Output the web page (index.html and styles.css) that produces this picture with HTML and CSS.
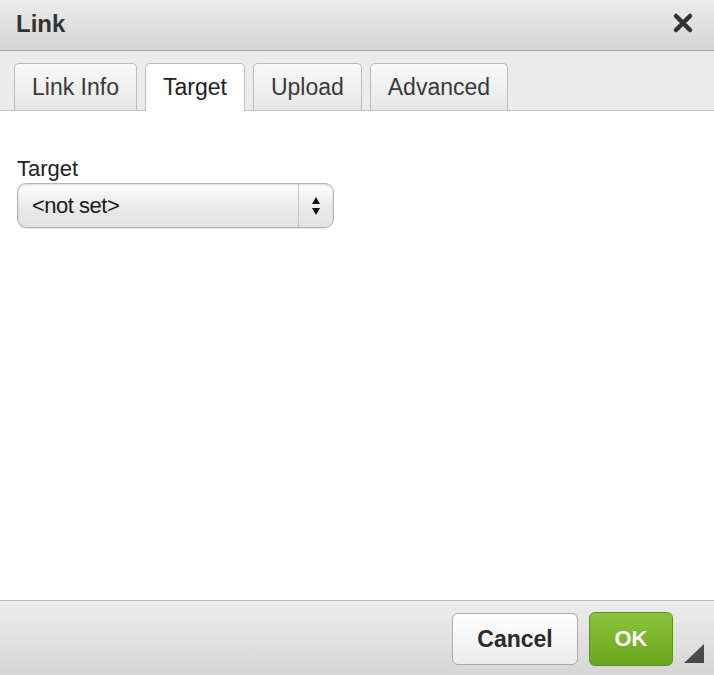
FILE: index.html
```html
<!DOCTYPE html>
<html lang="en">
<head>
  <meta charset="UTF-8">
  <title>Link</title>
  <link rel="stylesheet" href="styles.css">
</head>
<body>

  <div class="dialog">
    <div class="titlebar">
      <span class="title">Link</span>
      <svg class="close" width="22" height="22" viewBox="0 0 22 22">
        <path d="M4 4 L18 18 M18 4 L4 18" stroke="#333" stroke-width="4.5" stroke-linecap="round"/>
      </svg>
    </div>

    <div class="tabs">
      <div class="tab">Link Info</div>
      <div class="tab active">Target</div>
      <div class="tab">Upload</div>
      <div class="tab">Advanced</div>
    </div>

    <div class="content">
      <div class="label">Target</div>
      <div class="select">
        <span class="select-value">&lt;not set&gt;</span>
        <span class="select-arrows">
          <span class="arrow-up"></span>
          <span class="arrow-down"></span>
        </span>
      </div>
    </div>

    <div class="footer">
      <div class="btn cancel">Cancel</div>
      <div class="btn ok">OK</div>
      <div class="grip"></div>
    </div>
  </div>

</body>
</html>
```

FILE: styles.css
```css
body {
  margin: 0;
  font-family: "Liberation Sans", Arial, sans-serif;
  color: #333;
  background-color: #fff;
}

.dialog {
  height: 100vh;
  display: flex;
  flex-direction: column;
}

.titlebar {
  height: 50px;
  border-bottom: 1px solid #a4a4a4;
  background: linear-gradient(#ececec, #d4d4d4);
  display: flex;
  align-items: center;
  justify-content: space-between;
  padding: 0 20px 0 16px;
}

.title {
  font-size: 24px;
  font-weight: bold;
  color: #333;
  margin-top: -2px;
}

.close {
  margin-top: -4px;
}

.tabs {
  height: 47px;
  padding: 12px 0 0 14px;
  background-color: #ebebeb;
  border-bottom: 1px solid #c6c6c6;
  display: flex;
  align-items: flex-end;
  gap: 8px;
}

.tab {
  height: 47px;
  box-sizing: border-box;
  padding: 0 17px;
  border: 1px solid #bcbcbc;
  border-bottom: none;
  border-radius: 5px 5px 0 0;
  background: linear-gradient(#f9f9f9, #e6e6e6);
  font-size: 23px;
  line-height: 46px;
  color: #3a3a3a;
}

.tab.active {
  height: 48px;
  margin-bottom: -1px;
  background: #fff;
  color: #222;
}

.content {
  flex: 1;
  padding: 46px 17px 0;
}

.label {
  font-size: 22px;
  line-height: 24px;
  color: #222;
  margin-bottom: 2px;
}

.select {
  width: 317px;
  height: 45px;
  box-sizing: border-box;
  border: 1px solid #b4b4b4;
  border-radius: 9px;
  background: linear-gradient(#fdfdfd, #e9e9e9 55%, #e2e2e2);
  box-shadow: inset 0 1px 2px rgba(0, 0, 0, 0.15), 0 1px 1px rgba(0, 0, 0, 0.1);
  display: flex;
  align-items: center;
}

.select-value {
  flex: 1;
  padding-left: 14px;
  font-size: 22px;
  letter-spacing: -0.5px;
  color: #1a1a1a;
}

.select-arrows {
  width: 34px;
  height: 100%;
  border-left: 1px solid #c2c2c2;
  display: flex;
  flex-direction: column;
  align-items: center;
  justify-content: center;
  gap: 4px;
}

.arrow-up {
  border-left: 4px solid transparent;
  border-right: 4px solid transparent;
  border-bottom: 7px solid #111;
}

.arrow-down {
  border-left: 4px solid transparent;
  border-right: 4px solid transparent;
  border-top: 7px solid #111;
}

.footer {
  height: 75px;
  box-sizing: border-box;
  border-top: 1px solid #bdbdbd;
  background: linear-gradient(#ececec, #d6d6d6);
  display: flex;
  justify-content: flex-end;
  align-items: flex-start;
  padding: 11px 10px 0 0;
  gap: 11px;
}

.btn {
  box-sizing: border-box;
  border-radius: 6px;
  font-size: 23px;
  font-weight: bold;
  display: flex;
  align-items: center;
  justify-content: center;
}

.cancel {
  width: 126px;
  height: 52px;
  margin-top: 1px;
  border: 1px solid #a9a9a9;
  background: linear-gradient(#ffffff, #ebebeb);
  color: #2a2a2a;
}

.ok {
  width: 84px;
  height: 54px;
  border: 1px solid #5e9419;
  background: linear-gradient(#8cc43c, #6aa61e);
  color: #fff;
  font-size: 22px;
}

.grip {
  align-self: flex-end;
  width: 0;
  height: 0;
  margin-bottom: 12px;
  border-left: 20px solid transparent;
  border-bottom: 19px solid #4a4a4a;
}
```
